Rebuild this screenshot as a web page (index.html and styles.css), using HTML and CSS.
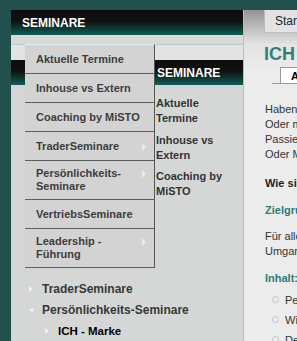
FILE: index.html
```html
<!DOCTYPE html>
<html lang="de">
<head>
  <meta charset="UTF-8">
  <meta name="viewport" content="width=device-width, initial-scale=1">
  <title>ICH - Marke</title>
  <link rel="stylesheet" href="styles.css">
</head>
<body>
  <div class="page">
    <aside class="sidebar">
      <div class="side-head">SEMINARE</div>
      <div class="side-gap"></div>
      <div class="sub">
        <div class="sub-top"></div>
        <div class="side-head sub-head">SEMINARE</div>
        <ul class="sub-links">
          <li>Aktuelle Termine</li>
          <li>Inhouse vs Extern</li>
          <li>Coaching by MiSTO</li>
        </ul>
      </div>

      <ul class="tree">
        <li class="closed">TraderSeminare</li>
        <li class="open">Persönlichkeits-Seminare
          <ul>
            <li class="closed current">ICH - Marke</li>
          </ul>
        </li>
      </ul>

      <!-- aufgeklapptes Menue -->
      <ul class="dropdown">
        <li>Aktuelle Termine</li>
        <li>Inhouse vs Extern</li>
        <li>Coaching by MiSTO</li>
        <li class="has-sub">TraderSeminare</li>
        <li class="has-sub two">Persönlichkeits-<br>Seminare</li>
        <li>VertriebsSeminare</li>
        <li class="has-sub two">Leadership -<br>Führung</li>
      </ul>
    </aside>

    <main class="content">
      <div class="top-tab">Startseite</div>
      <h1>ICH - Marke</h1>
      <div class="tabs"><span class="tab">Allgemein</span></div>

      <div class="body-text">
        <p class="text intro">Haben Sie sich schon einmal gefragt, wie Sie wirken?<br>Oder möchten Sie Ihre Ausstrahlung stärken?<br>Passiert es Ihnen, dass Sie übersehen werden?<br>Oder Menschen Sie falsch einschätzen?</p>
        <p class="text question">Wie sieht Ihre persönliche Marke aus?</p>
        <p class="label goal">Zielgruppe:</p>
        <p class="text audience">Für alle, die ihre Wirkung im<br>Umgang mit anderen verbessern wollen.</p>
        <p class="label topics">Inhalt:</p>
        <ul class="points">
          <li>Persönlichkeit und Auftreten</li>
          <li>Wirkung auf andere</li>
          <li>Der erste Eindruck</li>
        </ul>
      </div>
    </main>
  </div>
</body>
</html>
```

FILE: styles.css
```css
* {
  box-sizing: border-box;
}
html, body {
  margin: 0;
  height: 100%;
}
body {
  background: #21504d;
  font-family: "Liberation Sans", Arial, sans-serif;
  overflow: hidden;
}
ul {
  margin: 0;
  padding: 0;
  list-style: none;
}
p {
  margin: 0;
}

.page {
  display: flex;
  height: calc(100% - 10px);
  margin: 10px 0 0 11px;
}

/* Sidebar */
.sidebar {
  position: relative;
  flex: 0 0 233px;
  background: #d5d7d7;
  border-right: 1px solid #b9bdbd;
}
.side-head {
  height: 25px;
  padding: 6px 0 0 11px;
  background: linear-gradient(#0c0c0c 0%, #111 45%, #0f5d57 100%);
  color: #fff;
  font-size: 12px;
  font-weight: bold;
  line-height: 14px;
}
.side-gap {
  height: 10px;
  background: #d8dada;
  border-bottom: 1px solid #c6c9c9;
}
.sub-top {
  height: 15px;
  background: #e2e4e4;
}
.sub-head {
  padding-left: 146px;
}
.sub-links {
  padding: 11px 0 0 145px;
  width: 231px;
}
.sub-links li {
  margin-bottom: 6.5px;
  color: #333;
  font-size: 11px;
  font-weight: bold;
  line-height: 15px;
}

.tree {
  margin-top: 80px;
  padding-left: 18px;
  color: #383838;
  font-size: 12px;
  font-weight: bold;
  line-height: 21px;
}
.tree ul {
  padding-left: 16px;
}
.tree li::before {
  content: "";
  display: inline-block;
  vertical-align: 1px;
  margin-right: 9px;
  border-left: 4px solid #f2f2f2;
  border-top: 3px solid transparent;
  border-bottom: 3px solid transparent;
}
.tree li.open::before {
  margin-right: 8px;
  border-top: 4px solid #f2f2f2;
  border-right: 2px solid transparent;
  border-left: 3px solid transparent;
  border-bottom: 0;
}
.tree .current {
  color: #000;
  font-size: 11.5px;
}

/* Dropdown */
.dropdown {
  position: absolute;
  top: 34px;
  left: 14px;
  width: 130px;
  background: #d3d3d3;
  border-top: 1px solid #e9e9e9;
  border-right: 1px solid #555;
}
.dropdown li {
  position: relative;
  padding: 8px 12px 7px 11px;
  border-bottom: 1px solid #5e5e5e;
  color: #3d3d3d;
  font-size: 11px;
  font-weight: bold;
  line-height: 13px;
}
.dropdown li.two {
  padding-top: 6px;
  padding-bottom: 6px;
}
.dropdown li.has-sub::after {
  content: "";
  position: absolute;
  top: 11px;
  right: 8px;
  border-left: 4px solid #ebebeb;
  border-top: 4px solid transparent;
  border-bottom: 4px solid transparent;
}
.dropdown li.two::after {
  top: 9px;
}

/* Inhalt */
.content {
  flex: 1;
  min-width: 0;
  padding-left: 20px;
  background: linear-gradient(#939393, #e3e3e3 34px, #ececec 60px);
  white-space: nowrap;
  overflow: hidden;
}
.top-tab {
  display: inline-block;
  height: 23px;
  padding: 0 10px;
  background: #e3e3e3;
  border: 1px solid #bdbdbd;
  border-top: 0;
  color: #222;
  font-size: 12px;
  line-height: 22px;
}
h1 {
  margin: 10px 0 0;
  color: #317f7c;
  font-size: 18px;
  line-height: 22px;
}
.tabs {
  display: flex;
  height: 17px;
  margin: 2px 0 0 8px;
  padding-left: 8px;
  border-bottom: 1px solid #9a9a9a;
}
.tab {
  padding: 0 10px;
  background: #fff;
  border: 1px solid #9a9a9a;
  border-bottom: 0;
  color: #000;
  font-size: 11px;
  font-weight: bold;
  line-height: 16px;
}
.body-text {
  padding-left: 1px;
}
.text {
  color: #333;
  font-size: 11px;
  line-height: 15px;
}
.intro {
  margin-top: 18px;
}
.question {
  margin-top: 14px;
  color: #222;
  font-weight: bold;
}
.label {
  color: #2f7b77;
  font-size: 11px;
  font-weight: bold;
  line-height: 15px;
}
.goal {
  margin-top: 12px;
}
.audience {
  margin-top: 11px;
}
.topics {
  margin-top: 12px;
}
.points {
  margin-top: 4px;
  padding-left: 7px;
  color: #333;
  font-size: 11px;
  line-height: 20px;
}
.points li::before {
  content: "";
  display: inline-block;
  width: 5px;
  height: 5px;
  margin-right: 6px;
  border: 1px solid #c4c4c4;
  border-radius: 50%;
  vertical-align: 1px;
}
```
